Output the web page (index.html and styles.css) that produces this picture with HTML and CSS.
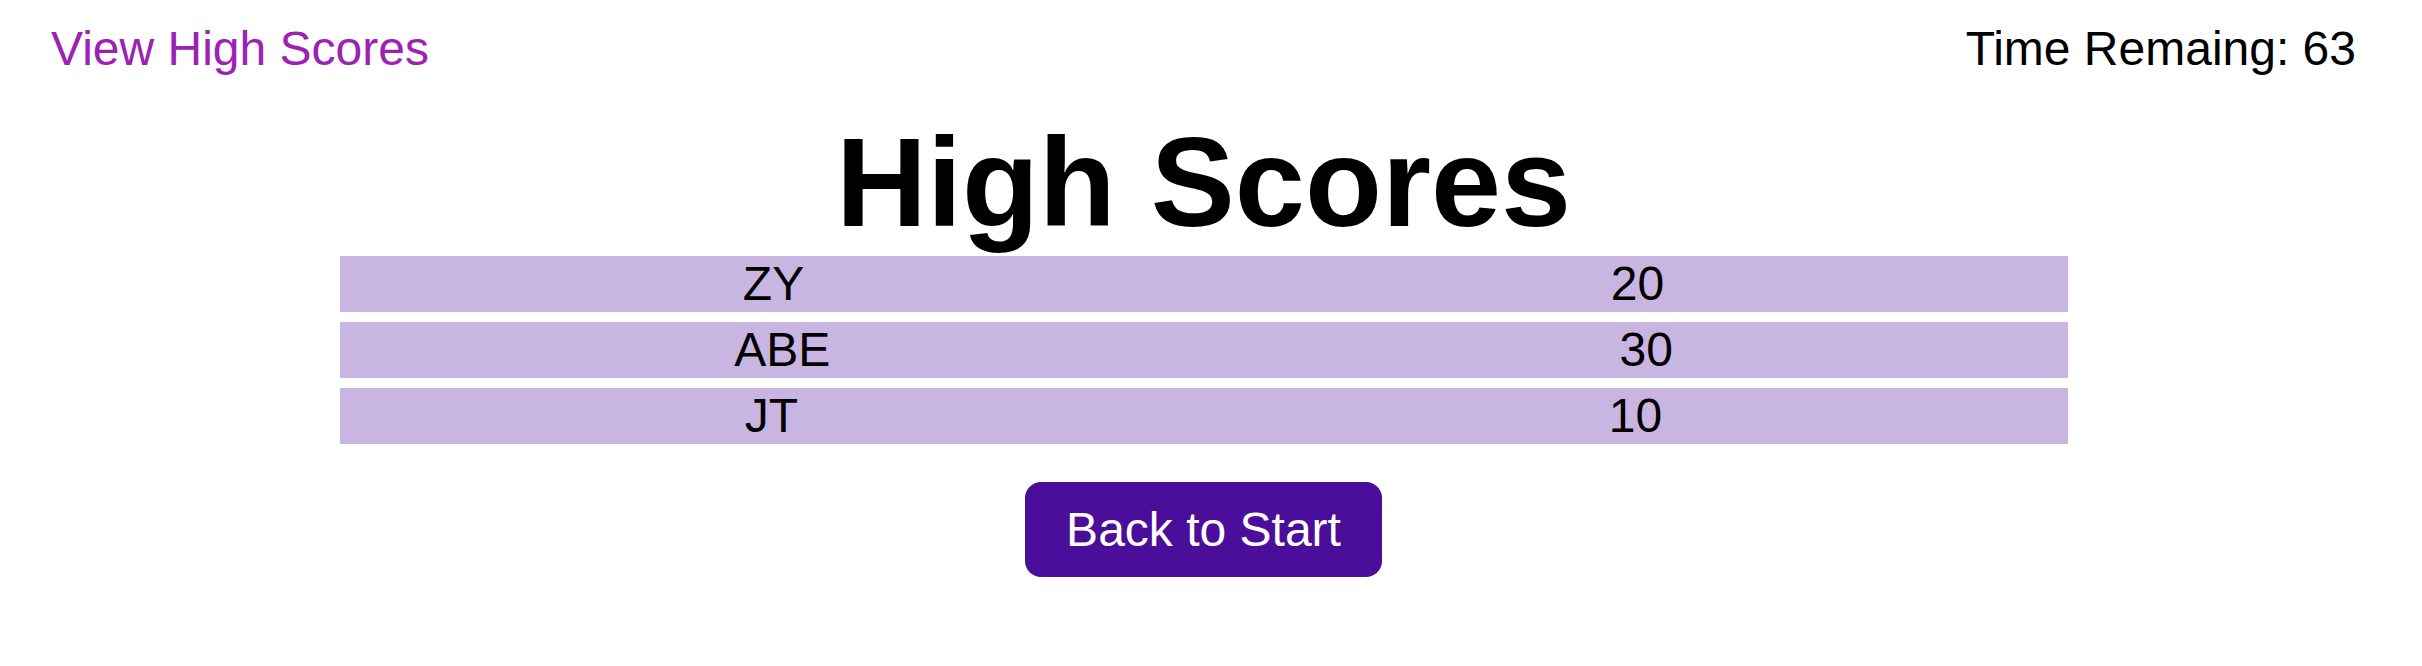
FILE: index.html
```html
<!DOCTYPE html>
<html lang="en">
<head>
<meta charset="utf-8">
<title>High Scores</title>
<link rel="stylesheet" href="styles.css">
</head>
<body>
<div class="page">
  <header class="topbar">
    <a class="link" href="#">View High Scores</a>
    <span class="timer">Time Remaing: 63</span>
  </header>
  <main class="scores">
    <h1 class="title">High Scores</h1>
    <ul class="list">
      <li class="row"><span>ZY</span><span>20</span></li>
      <li class="row"><span>ABE</span><span>30</span></li>
      <li class="row"><span>JT</span><span>10</span></li>
    </ul>
    <button class="back" type="button">Back to Start</button>
  </main>
</div>
</body>
</html>
```
FILE: styles.css
```css
body {
  margin: 0;
  font-family: "Liberation Sans", Arial, Helvetica, sans-serif;
  font-size: 48px;
  color: #000;
  background: #fff;
}

.page {
  width: 2407px;
}

.topbar {
  display: flex;
  justify-content: space-between;
  padding: 21px 51px 0 51px;
  line-height: 55px;
}

.link {
  color: #9c22b4;
  text-decoration: none;
}

.scores {
  width: 1728px;
  margin: 33px auto 0;
  display: flex;
  flex-direction: column;
  align-items: center;
}

.title {
  margin: 0;
  font-size: 126px;
  font-weight: bold;
  line-height: 147px;
}

.list {
  list-style: none;
  margin: 0;
  padding: 0;
  width: 100%;
  display: flex;
  flex-direction: column;
  gap: 10px;
}

.row {
  background: #c8b5e1;
  height: 56px;
  line-height: 56px;
  display: flex;
  justify-content: space-around;
}

.back {
  margin-top: 38px;
  background: #4b0e9b;
  color: #fff;
  border: 0;
  border-radius: 16px;
  font: inherit;
  line-height: 55px;
  padding: 20px 41px;
  cursor: pointer;
}
```
